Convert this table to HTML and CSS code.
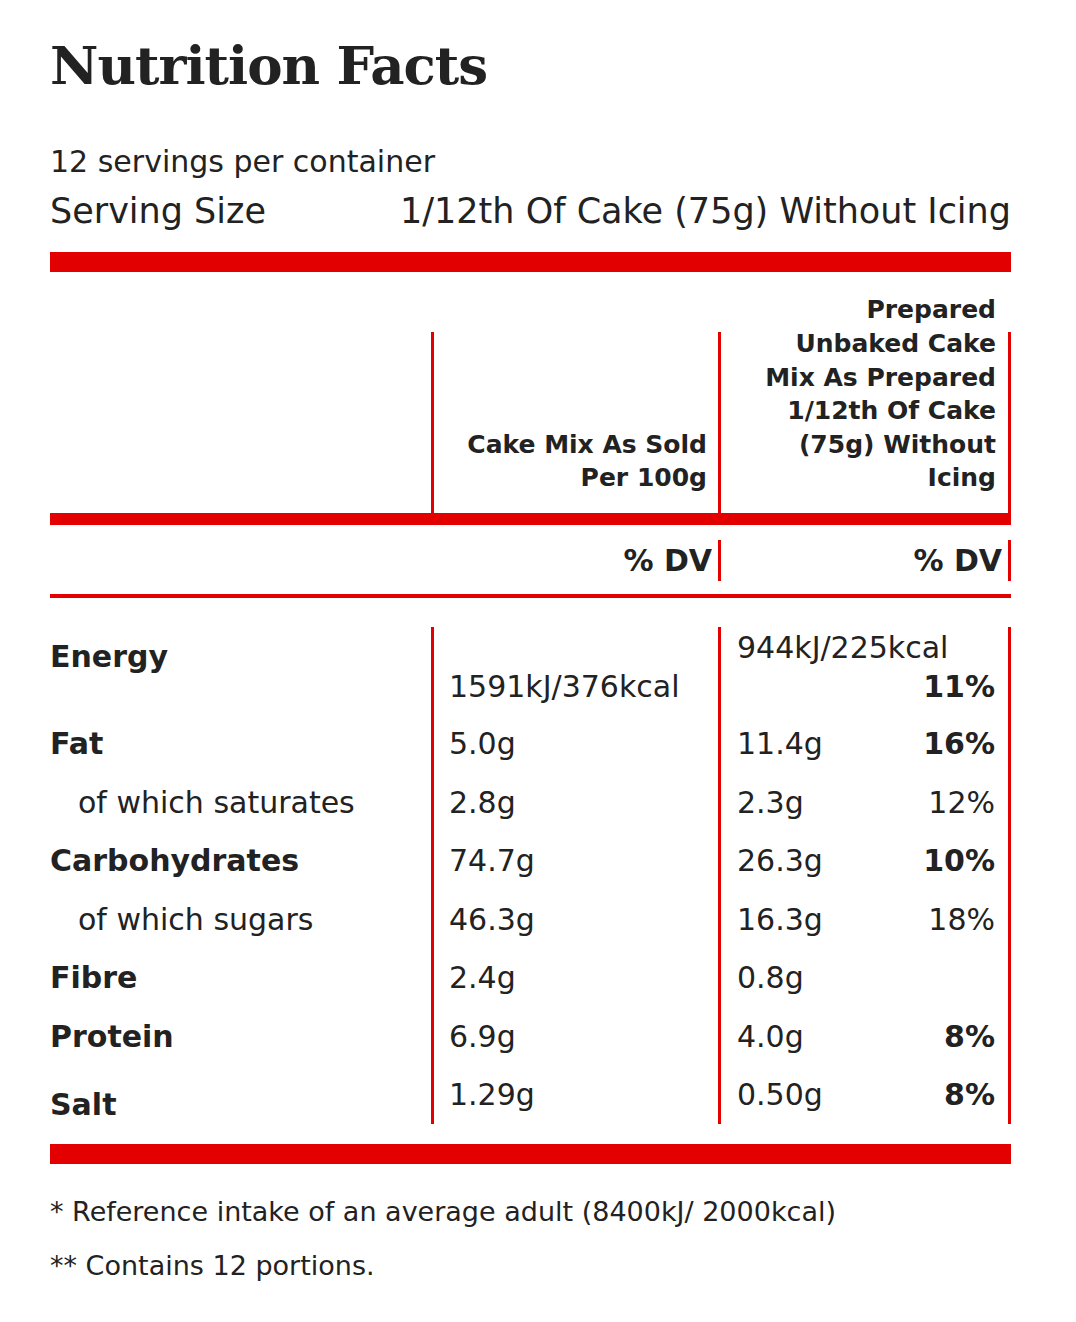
FILE: index.html
```html
<!DOCTYPE html>
<html lang="en">
<head>
<meta charset="utf-8">
<title>Nutrition Facts</title>
<link rel="stylesheet" href="styles.css">
</head>
<body>
<div class="label">
  <h1 class="title">Nutrition Facts</h1>
  <p class="servings">12 servings per container</p>
  <div class="serving-size"><span>Serving Size</span><span>1/12th Of Cake (75g) Without Icing</span></div>
  <div class="bar-thick"></div>

  <div class="head">
    <div class="head-cell h1c"></div>
    <div class="head-cell h2c">Cake Mix As Sold Per 100g</div>
    <div class="head-cell h3c">Prepared Unbaked Cake Mix As Prepared 1/12th Of Cake (75g) Without Icing</div>
  </div>
  <div class="bar-mid"></div>

  <div class="dv-row">
    <div class="dv-cell d1"></div>
    <div class="dv-cell d2">% DV</div>
    <div class="dv-cell d3">% DV</div>
  </div>
  <div class="bar-thin"></div>

  <div class="facts">
    <div class="row row-energy">
      <div class="cell c1 strong">Energy</div>
      <div class="cell c2">1591kJ/376kcal</div>
      <div class="cell c3"><span>944kJ/225kcal</span><span class="pct strong">11%</span></div>
    </div>
    <div class="row">
      <div class="cell c1 strong">Fat</div>
      <div class="cell c2">5.0g</div>
      <div class="cell c3"><span>11.4g</span><span class="pct strong">16%</span></div>
    </div>
    <div class="row">
      <div class="cell c1 sub">of which saturates</div>
      <div class="cell c2">2.8g</div>
      <div class="cell c3"><span>2.3g</span><span class="pct">12%</span></div>
    </div>
    <div class="row">
      <div class="cell c1 strong">Carbohydrates</div>
      <div class="cell c2">74.7g</div>
      <div class="cell c3"><span>26.3g</span><span class="pct strong">10%</span></div>
    </div>
    <div class="row">
      <div class="cell c1 sub">of which sugars</div>
      <div class="cell c2">46.3g</div>
      <div class="cell c3"><span>16.3g</span><span class="pct">18%</span></div>
    </div>
    <div class="row">
      <div class="cell c1 strong">Fibre</div>
      <div class="cell c2">2.4g</div>
      <div class="cell c3"><span>0.8g</span><span class="pct"></span></div>
    </div>
    <div class="row">
      <div class="cell c1 strong">Protein</div>
      <div class="cell c2">6.9g</div>
      <div class="cell c3"><span>4.0g</span><span class="pct strong">8%</span></div>
    </div>
    <div class="row row-salt">
      <div class="cell c1 strong">Salt</div>
      <div class="cell c2">1.29g</div>
      <div class="cell c3"><span>0.50g</span><span class="pct strong">8%</span></div>
    </div>
  </div>
  <div class="bar-bottom"></div>

  <div class="foot">
    <p>* Reference intake of an average adult (8400kJ/ 2000kcal)</p>
    <p>** Contains 12 portions.</p>
  </div>
</div>
</body>
</html>
```

FILE: styles.css
```css
* {
  box-sizing: border-box;
}

body {
  margin: 0;
  background: #ffffff;
  color: #222222;
  font-family: "DejaVu Sans", "Noto Sans", sans-serif;
}

.label {
  width: 961px;
  margin-left: 50px;
  padding-top: 39px;
  padding-bottom: 40px;
}

.title {
  font-family: "DejaVu Serif", "Liberation Serif", serif;
  font-weight: 700;
  font-size: 53px;
  line-height: 53px;
  letter-spacing: -1px;
  margin: 0 0 52px;
}

.servings {
  font-size: 30px;
  line-height: 36px;
  margin: 0 0 10px;
}

.serving-size {
  display: flex;
  justify-content: space-between;
  font-size: 35px;
  line-height: 42px;
  margin-bottom: 20px;
}

.bar-thick {
  height: 20px;
  background: #e30000;
}

.head,
.facts .row {
  display: grid;
  grid-template-columns: 381px 287px 293px;
}

.head {
  margin-top: 60px;
  height: 181px;
  grid-template-rows: 181px;
}

.head-cell {
  height: 181px;
  min-height: 0;
  display: flex;
  flex-direction: column;
  justify-content: flex-end;
  text-align: right;
  font-weight: 700;
  font-size: 25px;
  line-height: 33.6px;
  padding-bottom: 18px;
}

.h2c {
  border-left: 3px solid #e30000;
  padding-left: 2px;
  padding-right: 11px;
}

.h3c {
  border-left: 3px solid #e30000;
  border-right: 3px solid #e30000;
  padding-left: 28px;
  padding-right: 12px;
}

.bar-mid {
  height: 12px;
  background: #e30000;
}

.dv-row {
  display: grid;
  grid-template-columns: 381px 290px 290px;
  margin-top: 15px;
  height: 41px;
}

.dv-cell {
  font-weight: 700;
  font-size: 30px;
  line-height: 41px;
  text-align: right;
}

.d2 {
  border-right: 3px solid #e30000;
  padding-right: 6px;
}

.d3 {
  border-right: 3px solid #e30000;
  padding-right: 6px;
}

.bar-thin {
  margin-top: 13px;
  height: 4px;
  background: #e30000;
}

.facts {
  margin-top: 29px;
  font-size: 30px;
  line-height: 38.5px;
}

.cell {
  padding-top: 10px;
  padding-bottom: 10px;
}

.c2 {
  border-left: 3px solid #e30000;
  padding-left: 15px;
}

.c3 {
  border-left: 3px solid #e30000;
  border-right: 3px solid #e30000;
  padding-left: 16px;
  padding-right: 13px;
  display: flex;
  justify-content: space-between;
}

.strong {
  font-weight: 700;
}

.sub {
  padding-left: 28px;
}

.row-energy .cell {
  padding-top: 2px;
  padding-bottom: 9px;
}

.row-energy .c1 {
  padding-top: 11px;
}

.row-energy .c2 {
  display: flex;
  flex-direction: column;
  justify-content: flex-end;
}

.row-energy .c3 {
  flex-direction: column;
  justify-content: flex-start;
}

.row-energy .c3 .pct {
  align-self: flex-end;
}

.row-salt .cell {
  padding-bottom: 8.5px;
}

.row-salt .c1 {
  padding-top: 19.5px;
  padding-bottom: 0;
}

.bar-bottom {
  margin-top: 20px;
  height: 20px;
  background: #e30000;
}

.foot {
  margin-top: 31.5px;
}

.foot p {
  font-size: 27px;
  line-height: 32.4px;
  margin: 0 0 21.6px;
}
```
